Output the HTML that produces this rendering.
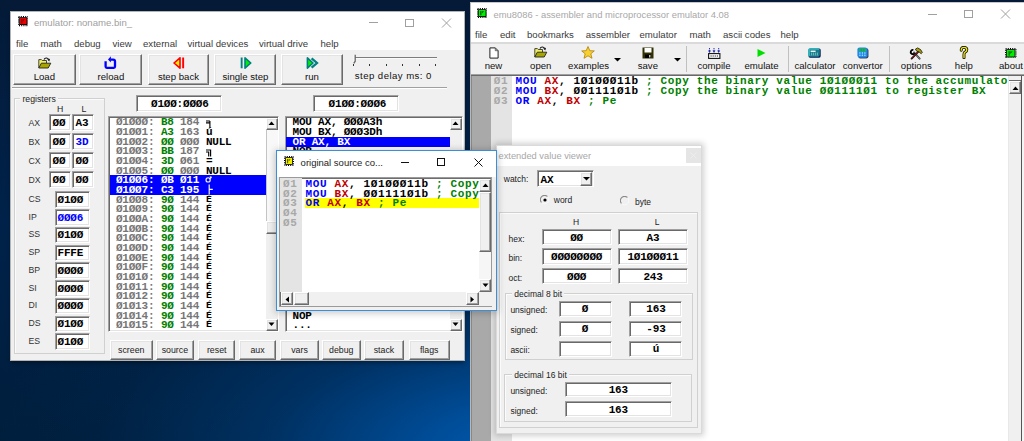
<!DOCTYPE html><html><head><meta charset="utf-8"><style>
html,body{margin:0;padding:0;}
body{width:1024px;height:441px;overflow:hidden;position:relative;
background:radial-gradient(ellipse 560px 250px at 545px 455px, rgba(0,94,186,1) 0%, rgba(0,86,170,0.82) 22%, rgba(0,70,140,0.45) 50%, rgba(0,50,100,0.12) 80%, rgba(0,40,80,0) 100%), linear-gradient(180deg,#041a37 0%,#00224a 50%,#001e3c 100%);}
div{position:absolute;box-sizing:border-box;}
.rb{background:#f0f0f0;border-top:1px solid #fff;border-left:1px solid #fff;border-right:1px solid #6a6a6a;border-bottom:1px solid #6a6a6a;box-shadow:inset -1px -1px 0 #a0a0a0, inset 1px 1px 0 #e3e3e3;}
.sk{border-top:1px solid #a0a0a0;border-left:1px solid #a0a0a0;border-right:1px solid #fff;border-bottom:1px solid #fff;box-shadow:inset 1px 1px 0 #696969, inset -1px -1px 0 #e3e3e3;}
.gb{border:1px solid #d0d0d0;box-shadow:inset 1px 1px 0 #fbfbfb;}
</style></head><body>
<div style="left:10px;top:11px;width:455px;height:349.5px;background:#f0f0f0;border:1px solid #b4b4b4;box-shadow:0 3px 4px -1px rgba(0,0,0,0.35);"></div>
<div style="left:11px;top:12px;width:453px;height:38px;background:#fff;"></div>
<svg style="position:absolute;left:17.6px;top:16.4px" width="10.6" height="10.2" viewBox="0 0 10.6 10.2"><rect x="0.6" y="0.6" width="9.40" height="9.00" fill="none" stroke="#000" stroke-width="1.2" stroke-dasharray="1 1.2"/><rect x="1.2" y="1.2" width="8.20" height="7.80" fill="#000"/><rect x="2" y="2" width="6.60" height="6.20" fill="#ee0000"/><path d="M3.82 3.06v4.28" stroke="#500000" stroke-width="1"/><path d="M4.88 3.26h2.12l-2.12 2.24z" fill="#500000"/></svg>
<div style="left:34px;top:17.18px;font-size:9.6px;line-height:12.48px;color:#a0a0a0;font-weight:400;white-space:pre;font-family:'Liberation Sans', sans-serif;">emulator: noname.bin_</div>
<div style="left:369px;top:22px;width:9px;height:1px;background:#a0a0a0;"></div>
<div style="left:405px;top:18.5px;width:9px;height:8.5px;border:1px solid #a0a0a0;"></div>
<svg style="position:absolute;left:441px;top:18px" width="11" height="10" viewBox="0 0 11 10"><path d="M1 0.5L10 9.5M10 0.5L1 9.5" stroke="#a0a0a0" stroke-width="1"/></svg>
<div style="left:16px;top:37.68px;font-size:9.6px;line-height:12.48px;color:#3a3a3a;font-weight:400;white-space:pre;font-family:'Liberation Sans', sans-serif;">file</div>
<div style="left:40.5px;top:37.68px;font-size:9.6px;line-height:12.48px;color:#3a3a3a;font-weight:400;white-space:pre;font-family:'Liberation Sans', sans-serif;">math</div>
<div style="left:74px;top:37.68px;font-size:9.6px;line-height:12.48px;color:#3a3a3a;font-weight:400;white-space:pre;font-family:'Liberation Sans', sans-serif;">debug</div>
<div style="left:112.5px;top:37.68px;font-size:9.6px;line-height:12.48px;color:#3a3a3a;font-weight:400;white-space:pre;font-family:'Liberation Sans', sans-serif;">view</div>
<div style="left:143px;top:37.68px;font-size:9.6px;line-height:12.48px;color:#3a3a3a;font-weight:400;white-space:pre;font-family:'Liberation Sans', sans-serif;">external</div>
<div style="left:187.5px;top:37.68px;font-size:9.6px;line-height:12.48px;color:#3a3a3a;font-weight:400;white-space:pre;font-family:'Liberation Sans', sans-serif;">virtual devices</div>
<div style="left:259px;top:37.68px;font-size:9.6px;line-height:12.48px;color:#3a3a3a;font-weight:400;white-space:pre;font-family:'Liberation Sans', sans-serif;">virtual drive</div>
<div style="left:320.5px;top:37.68px;font-size:9.6px;line-height:12.48px;color:#3a3a3a;font-weight:400;white-space:pre;font-family:'Liberation Sans', sans-serif;">help</div>
<div class="rb" style="left:13px;top:53.5px;width:62.599999999999994px;height:31px;"></div>
<div style="left:13px;top:70.98px;font-size:9.6px;line-height:12.48px;color:#111;font-weight:400;white-space:pre;font-family:'Liberation Sans', sans-serif;text-align:center;width:62.599999999999994px;">Load</div>
<div class="rb" style="left:79.4px;top:53.5px;width:63.099999999999994px;height:31px;"></div>
<div style="left:79.4px;top:70.98px;font-size:9.6px;line-height:12.48px;color:#111;font-weight:400;white-space:pre;font-family:'Liberation Sans', sans-serif;text-align:center;width:63.099999999999994px;">reload</div>
<div class="rb" style="left:147.5px;top:53.5px;width:61.900000000000006px;height:31px;"></div>
<div style="left:147.5px;top:70.98px;font-size:9.6px;line-height:12.48px;color:#111;font-weight:400;white-space:pre;font-family:'Liberation Sans', sans-serif;text-align:center;width:61.900000000000006px;">step back</div>
<div class="rb" style="left:214.4px;top:53.5px;width:62.099999999999994px;height:31px;"></div>
<div style="left:214.4px;top:70.98px;font-size:9.6px;line-height:12.48px;color:#111;font-weight:400;white-space:pre;font-family:'Liberation Sans', sans-serif;text-align:center;width:62.099999999999994px;">single step</div>
<div class="rb" style="left:281px;top:53.5px;width:62px;height:31px;"></div>
<div style="left:281px;top:70.98px;font-size:9.6px;line-height:12.48px;color:#111;font-weight:400;white-space:pre;font-family:'Liberation Sans', sans-serif;text-align:center;width:62px;">run</div>
<svg style="position:absolute;left:37.5px;top:56.5px" width="14" height="12" viewBox="0 0 14 12"><path d="M0.8 11V2.6h2.6l0.9 0.9h4.2v2.6" fill="#f2f060" stroke="#333" stroke-width="0.9"/><path d="M0.8 11L3.3 6.2H12.8L10.2 11Z" fill="#a8a400" stroke="#222" stroke-width="0.9"/><path d="M6 2.6C7 0.6 9.4 0.4 10.6 2.4" fill="none" stroke="#111" stroke-width="1.1"/><path d="M9.2 2.6L12 1.8L11.3 4.6z" fill="#111"/></svg>
<svg style="position:absolute;left:104px;top:56px" width="13" height="13" viewBox="0 0 13 13"><path d="M1.6 5.2V10.6Q1.6 11.8 2.8 11.8H9.8Q11 11.8 11 10.6V5.4Q11 3.6 9.2 3.6H6.6" fill="none" stroke="#0000ff" stroke-width="2.3"/><path d="M4 3.6L6.9 0.2V6.6Z" fill="#0000ff"/></svg>
<svg style="position:absolute;left:172.5px;top:56.5px" width="12" height="12" viewBox="0 0 12 12"><path d="M1 6L7 0.8V11.2Z" fill="#ffee00" stroke="#ff0000" stroke-width="1.6" stroke-linejoin="round"/><rect x="9.2" y="0.5" width="1.9" height="10.8" fill="#ff0000"/></svg>
<svg style="position:absolute;left:239.5px;top:56.5px" width="12" height="12" viewBox="0 0 12 12"><rect x="0.7" y="0.5" width="1.9" height="10.8" fill="#008080"/><path d="M5 0.9L10.8 6L5 11.1Z" fill="#00ee00" stroke="#008080" stroke-width="1.6" stroke-linejoin="round"/></svg>
<svg style="position:absolute;left:305.5px;top:56.5px" width="13" height="12" viewBox="0 0 13 12"><path d="M5.6 1.3L11 6L5.6 10.7" fill="none" stroke="#008080" stroke-width="2.3"/><path d="M1.4 0.9L7 6L1.4 11.1Z" fill="#00ee00" stroke="#008080" stroke-width="1.6" stroke-linejoin="round"/></svg>
<div style="left:353.5px;top:56.5px;width:83px;height:2.6px;background:#7c7c7c;border-bottom:1px solid #fafafa;"></div>
<svg style="position:absolute;left:351.5px;top:53.5px" width="6" height="10" viewBox="0 0 6 10"><path d="M1 1.5Q2 0.5 3 0.8V7.5L1.5 9.5z" fill="#f8f8f8"/><path d="M3.2 0.8V7.2L1.8 9.4" fill="none" stroke="#666" stroke-width="1.3"/></svg>
<div style="left:353.2px;top:63.5px;width:1px;height:2px;background:#333;"></div>
<div style="left:369.3px;top:63.5px;width:1px;height:2px;background:#333;"></div>
<div style="left:386.1px;top:63.5px;width:1px;height:2px;background:#333;"></div>
<div style="left:402.3px;top:63.5px;width:1px;height:2px;background:#333;"></div>
<div style="left:419.1px;top:63.5px;width:1px;height:2px;background:#333;"></div>
<div style="left:435.3px;top:63.5px;width:1px;height:2px;background:#333;"></div>
<div style="left:354.8px;top:70.48px;font-size:9.6px;line-height:12.48px;color:#111;font-weight:400;white-space:pre;font-family:'Liberation Sans', sans-serif;letter-spacing:0.45px;">step delay ms: 0</div>
<div style="left:12px;top:87px;width:435px;height:1px;background:#a0a0a0;"></div>
<div style="left:12px;top:88px;width:435px;height:1px;background:#fff;"></div>
<div class="gb" style="left:13.6px;top:98px;width:91.2px;height:256px"></div>
<div style="left:20px;top:94.08px;font-size:8.7px;line-height:11.31px;color:#222;font-weight:400;white-space:pre;font-family:'Liberation Sans', sans-serif;background:#f0f0f0;"> registers </div>
<div style="left:57px;top:104.08px;font-size:8.7px;line-height:11.31px;color:#222;font-weight:400;white-space:pre;font-family:'Liberation Sans', sans-serif;">H</div>
<div style="left:81.5px;top:104.08px;font-size:8.7px;line-height:11.31px;color:#222;font-weight:400;white-space:pre;font-family:'Liberation Sans', sans-serif;">L</div>
<div style="left:28.5px;top:118.08px;font-size:8.7px;line-height:11.31px;color:#333;font-weight:400;white-space:pre;font-family:'Liberation Sans', sans-serif;">AX</div>
<div class="sk" style="left:49px;top:113.5px;width:22px;height:17px;background:#fff;"></div>
<div class="sk" style="left:72px;top:113.5px;width:22px;height:17px;background:#fff;"></div>
<div style="left:52.5px;top:115.62px;font-size:11px;line-height:14.3px;color:#000;font-weight:700;white-space:pre;font-family:'Liberation Mono', monospace;letter-spacing:-0.2px;">ØØ</div>
<div style="left:75.5px;top:115.62px;font-size:11px;line-height:14.3px;color:#000;font-weight:700;white-space:pre;font-family:'Liberation Mono', monospace;letter-spacing:-0.2px;">A3</div>
<div style="left:28.5px;top:137.08px;font-size:8.7px;line-height:11.31px;color:#333;font-weight:400;white-space:pre;font-family:'Liberation Sans', sans-serif;">BX</div>
<div class="sk" style="left:49px;top:132.5px;width:22px;height:17px;background:#fff;"></div>
<div class="sk" style="left:72px;top:132.5px;width:22px;height:17px;background:#fff;"></div>
<div style="left:52.5px;top:134.62px;font-size:11px;line-height:14.3px;color:#000;font-weight:700;white-space:pre;font-family:'Liberation Mono', monospace;letter-spacing:-0.2px;">ØØ</div>
<div style="left:75.5px;top:134.62px;font-size:11px;line-height:14.3px;color:#0000ff;font-weight:700;white-space:pre;font-family:'Liberation Mono', monospace;letter-spacing:-0.2px;">3D</div>
<div style="left:28.5px;top:156.08px;font-size:8.7px;line-height:11.31px;color:#333;font-weight:400;white-space:pre;font-family:'Liberation Sans', sans-serif;">CX</div>
<div class="sk" style="left:49px;top:151.5px;width:22px;height:17px;background:#fff;"></div>
<div class="sk" style="left:72px;top:151.5px;width:22px;height:17px;background:#fff;"></div>
<div style="left:52.5px;top:153.62px;font-size:11px;line-height:14.3px;color:#000;font-weight:700;white-space:pre;font-family:'Liberation Mono', monospace;letter-spacing:-0.2px;">ØØ</div>
<div style="left:75.5px;top:153.62px;font-size:11px;line-height:14.3px;color:#000;font-weight:700;white-space:pre;font-family:'Liberation Mono', monospace;letter-spacing:-0.2px;">ØØ</div>
<div style="left:28.5px;top:175.08px;font-size:8.7px;line-height:11.31px;color:#333;font-weight:400;white-space:pre;font-family:'Liberation Sans', sans-serif;">DX</div>
<div class="sk" style="left:49px;top:170.5px;width:22px;height:17px;background:#fff;"></div>
<div class="sk" style="left:72px;top:170.5px;width:22px;height:17px;background:#fff;"></div>
<div style="left:52.5px;top:172.62px;font-size:11px;line-height:14.3px;color:#000;font-weight:700;white-space:pre;font-family:'Liberation Mono', monospace;letter-spacing:-0.2px;">ØØ</div>
<div style="left:75.5px;top:172.62px;font-size:11px;line-height:14.3px;color:#000;font-weight:700;white-space:pre;font-family:'Liberation Mono', monospace;letter-spacing:-0.2px;">ØØ</div>
<div style="left:28.5px;top:193.83px;font-size:8.7px;line-height:11.31px;color:#333;font-weight:400;white-space:pre;font-family:'Liberation Sans', sans-serif;">CS</div>
<div class="sk" style="left:55px;top:191.25px;width:35px;height:16.5px;background:#fff;"></div>
<div style="left:57.5px;top:192.87px;font-size:11px;line-height:14.3px;color:#000;font-weight:700;white-space:pre;font-family:'Liberation Mono', monospace;letter-spacing:-0.2px;">Ø1ØØ</div>
<div style="left:28.5px;top:211.58px;font-size:8.7px;line-height:11.31px;color:#333;font-weight:400;white-space:pre;font-family:'Liberation Sans', sans-serif;">IP</div>
<div class="sk" style="left:55px;top:209.0px;width:35px;height:16.5px;background:#fff;"></div>
<div style="left:57.5px;top:210.62px;font-size:11px;line-height:14.3px;color:#0000ff;font-weight:700;white-space:pre;font-family:'Liberation Mono', monospace;letter-spacing:-0.2px;">ØØØ6</div>
<div style="left:28.5px;top:229.33px;font-size:8.7px;line-height:11.31px;color:#333;font-weight:400;white-space:pre;font-family:'Liberation Sans', sans-serif;">SS</div>
<div class="sk" style="left:55px;top:226.75px;width:35px;height:16.5px;background:#fff;"></div>
<div style="left:57.5px;top:228.37px;font-size:11px;line-height:14.3px;color:#000;font-weight:700;white-space:pre;font-family:'Liberation Mono', monospace;letter-spacing:-0.2px;">Ø1ØØ</div>
<div style="left:28.5px;top:247.08px;font-size:8.7px;line-height:11.31px;color:#333;font-weight:400;white-space:pre;font-family:'Liberation Sans', sans-serif;">SP</div>
<div class="sk" style="left:55px;top:244.5px;width:35px;height:16.5px;background:#fff;"></div>
<div style="left:57.5px;top:246.12px;font-size:11px;line-height:14.3px;color:#000;font-weight:700;white-space:pre;font-family:'Liberation Mono', monospace;letter-spacing:-0.2px;">FFFE</div>
<div style="left:28.5px;top:264.83px;font-size:8.7px;line-height:11.31px;color:#333;font-weight:400;white-space:pre;font-family:'Liberation Sans', sans-serif;">BP</div>
<div class="sk" style="left:55px;top:262.25px;width:35px;height:16.5px;background:#fff;"></div>
<div style="left:57.5px;top:263.87px;font-size:11px;line-height:14.3px;color:#000;font-weight:700;white-space:pre;font-family:'Liberation Mono', monospace;letter-spacing:-0.2px;">ØØØØ</div>
<div style="left:28.5px;top:282.58px;font-size:8.7px;line-height:11.31px;color:#333;font-weight:400;white-space:pre;font-family:'Liberation Sans', sans-serif;">SI</div>
<div class="sk" style="left:55px;top:280.0px;width:35px;height:16.5px;background:#fff;"></div>
<div style="left:57.5px;top:281.62px;font-size:11px;line-height:14.3px;color:#000;font-weight:700;white-space:pre;font-family:'Liberation Mono', monospace;letter-spacing:-0.2px;">ØØØØ</div>
<div style="left:28.5px;top:300.33px;font-size:8.7px;line-height:11.31px;color:#333;font-weight:400;white-space:pre;font-family:'Liberation Sans', sans-serif;">DI</div>
<div class="sk" style="left:55px;top:297.75px;width:35px;height:16.5px;background:#fff;"></div>
<div style="left:57.5px;top:299.37px;font-size:11px;line-height:14.3px;color:#000;font-weight:700;white-space:pre;font-family:'Liberation Mono', monospace;letter-spacing:-0.2px;">ØØØØ</div>
<div style="left:28.5px;top:318.08px;font-size:8.7px;line-height:11.31px;color:#333;font-weight:400;white-space:pre;font-family:'Liberation Sans', sans-serif;">DS</div>
<div class="sk" style="left:55px;top:315.5px;width:35px;height:16.5px;background:#fff;"></div>
<div style="left:57.5px;top:317.12px;font-size:11px;line-height:14.3px;color:#000;font-weight:700;white-space:pre;font-family:'Liberation Mono', monospace;letter-spacing:-0.2px;">Ø1ØØ</div>
<div style="left:28.5px;top:335.83px;font-size:8.7px;line-height:11.31px;color:#333;font-weight:400;white-space:pre;font-family:'Liberation Sans', sans-serif;">ES</div>
<div class="sk" style="left:55px;top:333.25px;width:35px;height:16.5px;background:#fff;"></div>
<div style="left:57.5px;top:334.87px;font-size:11px;line-height:14.3px;color:#000;font-weight:700;white-space:pre;font-family:'Liberation Mono', monospace;letter-spacing:-0.2px;">Ø1ØØ</div>
<div class="sk" style="left:136.2px;top:95px;width:85.5px;height:16.5px;background:#fff;"></div>
<div style="left:151px;top:96.77px;font-size:11px;line-height:14.3px;color:#000;font-weight:700;white-space:pre;font-family:'Liberation Mono', monospace;letter-spacing:-0.2px;">Ø1ØØ:ØØØ6</div>
<div class="sk" style="left:313px;top:95px;width:85.75px;height:16.75px;background:#fff;"></div>
<div style="left:328.6px;top:96.77px;font-size:11px;line-height:14.3px;color:#000;font-weight:700;white-space:pre;font-family:'Liberation Mono', monospace;letter-spacing:-0.2px;">Ø1ØØ:ØØØ6</div>
<div class="sk" style="left:108px;top:116px;width:170.75px;height:215.8px;background:#fff;"></div>
<div style="left:109.5px;top:175.3px;width:156.5px;height:19.9px;background:#0000ff;"></div>
<div style="left:115.9px;top:115.42px;font-size:11px;line-height:14.3px;color:#767676;font-weight:700;white-space:pre;font-family:'Liberation Mono', monospace;letter-spacing:-0.2px;">Ø1ØØØ:</div>
<div style="left:160.9px;top:115.42px;font-size:11px;line-height:14.3px;color:#008000;font-weight:700;white-space:pre;font-family:'Liberation Mono', monospace;letter-spacing:-0.2px;">B8</div>
<div style="left:179.9px;top:115.42px;font-size:11px;line-height:14.3px;color:#767676;font-weight:700;white-space:pre;font-family:'Liberation Mono', monospace;letter-spacing:-0.2px;">184</div>
<svg style="position:absolute;left:204.9px;top:116.40px" width="9" height="12" viewBox="0 0 9 12"><path d="M1 5H4.9M1 6.9H4.9M4.9 5V11.6" fill="none" stroke="#000" stroke-width="1.15"/></svg>
<div style="left:115.9px;top:125.08px;font-size:11px;line-height:14.3px;color:#767676;font-weight:700;white-space:pre;font-family:'Liberation Mono', monospace;letter-spacing:-0.2px;">Ø1ØØ1:</div>
<div style="left:160.9px;top:125.08px;font-size:11px;line-height:14.3px;color:#008000;font-weight:700;white-space:pre;font-family:'Liberation Mono', monospace;letter-spacing:-0.2px;">A3</div>
<div style="left:179.9px;top:125.08px;font-size:11px;line-height:14.3px;color:#767676;font-weight:700;white-space:pre;font-family:'Liberation Mono', monospace;letter-spacing:-0.2px;">163</div>
<div style="left:205.9px;top:125.08px;font-size:11px;line-height:14.3px;color:#000;font-weight:700;white-space:pre;font-family:'Liberation Mono', monospace;letter-spacing:-0.2px;">ú</div>
<div style="left:115.9px;top:134.74px;font-size:11px;line-height:14.3px;color:#767676;font-weight:700;white-space:pre;font-family:'Liberation Mono', monospace;letter-spacing:-0.2px;">Ø1ØØ2:</div>
<div style="left:160.9px;top:134.74px;font-size:11px;line-height:14.3px;color:#008000;font-weight:700;white-space:pre;font-family:'Liberation Mono', monospace;letter-spacing:-0.2px;">ØØ</div>
<div style="left:179.9px;top:134.74px;font-size:11px;line-height:14.3px;color:#767676;font-weight:700;white-space:pre;font-family:'Liberation Mono', monospace;letter-spacing:-0.2px;">ØØØ</div>
<div style="left:205.9px;top:134.74px;font-size:11px;line-height:14.3px;color:#000;font-weight:700;white-space:pre;font-family:'Liberation Mono', monospace;letter-spacing:-0.2px;">NULL</div>
<div style="left:115.9px;top:144.40px;font-size:11px;line-height:14.3px;color:#767676;font-weight:700;white-space:pre;font-family:'Liberation Mono', monospace;letter-spacing:-0.2px;">Ø1ØØ3:</div>
<div style="left:160.9px;top:144.40px;font-size:11px;line-height:14.3px;color:#008000;font-weight:700;white-space:pre;font-family:'Liberation Mono', monospace;letter-spacing:-0.2px;">BB</div>
<div style="left:179.9px;top:144.40px;font-size:11px;line-height:14.3px;color:#767676;font-weight:700;white-space:pre;font-family:'Liberation Mono', monospace;letter-spacing:-0.2px;">187</div>
<svg style="position:absolute;left:204.9px;top:145.38px" width="9" height="12" viewBox="0 0 9 12"><path d="M1 5H5.6V11.6M1 7H3.7V11.6" fill="none" stroke="#000" stroke-width="1.15"/></svg>
<div style="left:115.9px;top:154.06px;font-size:11px;line-height:14.3px;color:#767676;font-weight:700;white-space:pre;font-family:'Liberation Mono', monospace;letter-spacing:-0.2px;">Ø1ØØ4:</div>
<div style="left:160.9px;top:154.06px;font-size:11px;line-height:14.3px;color:#008000;font-weight:700;white-space:pre;font-family:'Liberation Mono', monospace;letter-spacing:-0.2px;">3D</div>
<div style="left:179.9px;top:154.06px;font-size:11px;line-height:14.3px;color:#767676;font-weight:700;white-space:pre;font-family:'Liberation Mono', monospace;letter-spacing:-0.2px;">Ø61</div>
<div style="left:205.9px;top:154.06px;font-size:11px;line-height:14.3px;color:#000;font-weight:700;white-space:pre;font-family:'Liberation Mono', monospace;letter-spacing:-0.2px;">=</div>
<div style="left:115.9px;top:163.72px;font-size:11px;line-height:14.3px;color:#767676;font-weight:700;white-space:pre;font-family:'Liberation Mono', monospace;letter-spacing:-0.2px;">Ø1ØØ5:</div>
<div style="left:160.9px;top:163.72px;font-size:11px;line-height:14.3px;color:#008000;font-weight:700;white-space:pre;font-family:'Liberation Mono', monospace;letter-spacing:-0.2px;">ØØ</div>
<div style="left:179.9px;top:163.72px;font-size:11px;line-height:14.3px;color:#767676;font-weight:700;white-space:pre;font-family:'Liberation Mono', monospace;letter-spacing:-0.2px;">ØØØ</div>
<div style="left:205.9px;top:163.72px;font-size:11px;line-height:14.3px;color:#000;font-weight:700;white-space:pre;font-family:'Liberation Mono', monospace;letter-spacing:-0.2px;">NULL</div>
<div style="left:115.9px;top:173.38px;font-size:11px;line-height:14.3px;color:#fff;font-weight:700;white-space:pre;font-family:'Liberation Mono', monospace;letter-spacing:-0.2px;">Ø1ØØ6:</div>
<div style="left:160.9px;top:173.38px;font-size:11px;line-height:14.3px;color:#fff;font-weight:700;white-space:pre;font-family:'Liberation Mono', monospace;letter-spacing:-0.2px;">ØB</div>
<div style="left:179.9px;top:173.38px;font-size:11px;line-height:14.3px;color:#fff;font-weight:700;white-space:pre;font-family:'Liberation Mono', monospace;letter-spacing:-0.2px;">Ø11</div>
<svg style="position:absolute;left:204.9px;top:174.36px" width="9" height="12" viewBox="0 0 9 12"><path d="M4.6 5.2L6.2 3" fill="none" stroke="#fff" stroke-width="1.15"/><circle cx="3.1" cy="5.9" r="2.1" fill="none" stroke="#fff" stroke-width="1.1"/><path d="M4.4 2.6L6.6 2.5L6.5 4.6z" fill="#fff"/></svg>
<div style="left:115.9px;top:183.04px;font-size:11px;line-height:14.3px;color:#fff;font-weight:700;white-space:pre;font-family:'Liberation Mono', monospace;letter-spacing:-0.2px;">Ø1ØØ7:</div>
<div style="left:160.9px;top:183.04px;font-size:11px;line-height:14.3px;color:#fff;font-weight:700;white-space:pre;font-family:'Liberation Mono', monospace;letter-spacing:-0.2px;">C3</div>
<div style="left:179.9px;top:183.04px;font-size:11px;line-height:14.3px;color:#fff;font-weight:700;white-space:pre;font-family:'Liberation Mono', monospace;letter-spacing:-0.2px;">195</div>
<svg style="position:absolute;left:204.9px;top:184.02px" width="9" height="12" viewBox="0 0 9 12"><path d="M4.2 0.6V11.3M4.2 5.3H7.8" fill="none" stroke="#fff" stroke-width="1.15"/></svg>
<div style="left:115.9px;top:192.70px;font-size:11px;line-height:14.3px;color:#767676;font-weight:700;white-space:pre;font-family:'Liberation Mono', monospace;letter-spacing:-0.2px;">Ø1ØØ8:</div>
<div style="left:160.9px;top:192.70px;font-size:11px;line-height:14.3px;color:#008000;font-weight:700;white-space:pre;font-family:'Liberation Mono', monospace;letter-spacing:-0.2px;">9Ø</div>
<div style="left:179.9px;top:192.70px;font-size:11px;line-height:14.3px;color:#767676;font-weight:700;white-space:pre;font-family:'Liberation Mono', monospace;letter-spacing:-0.2px;">144</div>
<div style="left:205.9px;top:193.80px;font-size:9.8px;line-height:12.74px;color:#000;font-weight:700;white-space:pre;font-family:'Liberation Mono', monospace;letter-spacing:-0.2px;">É</div>
<div style="left:115.9px;top:202.36px;font-size:11px;line-height:14.3px;color:#767676;font-weight:700;white-space:pre;font-family:'Liberation Mono', monospace;letter-spacing:-0.2px;">Ø1ØØ9:</div>
<div style="left:160.9px;top:202.36px;font-size:11px;line-height:14.3px;color:#008000;font-weight:700;white-space:pre;font-family:'Liberation Mono', monospace;letter-spacing:-0.2px;">9Ø</div>
<div style="left:179.9px;top:202.36px;font-size:11px;line-height:14.3px;color:#767676;font-weight:700;white-space:pre;font-family:'Liberation Mono', monospace;letter-spacing:-0.2px;">144</div>
<div style="left:205.9px;top:203.46px;font-size:9.8px;line-height:12.74px;color:#000;font-weight:700;white-space:pre;font-family:'Liberation Mono', monospace;letter-spacing:-0.2px;">É</div>
<div style="left:115.9px;top:212.02px;font-size:11px;line-height:14.3px;color:#767676;font-weight:700;white-space:pre;font-family:'Liberation Mono', monospace;letter-spacing:-0.2px;">Ø1ØØA:</div>
<div style="left:160.9px;top:212.02px;font-size:11px;line-height:14.3px;color:#008000;font-weight:700;white-space:pre;font-family:'Liberation Mono', monospace;letter-spacing:-0.2px;">9Ø</div>
<div style="left:179.9px;top:212.02px;font-size:11px;line-height:14.3px;color:#767676;font-weight:700;white-space:pre;font-family:'Liberation Mono', monospace;letter-spacing:-0.2px;">144</div>
<div style="left:205.9px;top:213.12px;font-size:9.8px;line-height:12.74px;color:#000;font-weight:700;white-space:pre;font-family:'Liberation Mono', monospace;letter-spacing:-0.2px;">É</div>
<div style="left:115.9px;top:221.68px;font-size:11px;line-height:14.3px;color:#767676;font-weight:700;white-space:pre;font-family:'Liberation Mono', monospace;letter-spacing:-0.2px;">Ø1ØØB:</div>
<div style="left:160.9px;top:221.68px;font-size:11px;line-height:14.3px;color:#008000;font-weight:700;white-space:pre;font-family:'Liberation Mono', monospace;letter-spacing:-0.2px;">9Ø</div>
<div style="left:179.9px;top:221.68px;font-size:11px;line-height:14.3px;color:#767676;font-weight:700;white-space:pre;font-family:'Liberation Mono', monospace;letter-spacing:-0.2px;">144</div>
<div style="left:205.9px;top:222.78px;font-size:9.8px;line-height:12.74px;color:#000;font-weight:700;white-space:pre;font-family:'Liberation Mono', monospace;letter-spacing:-0.2px;">É</div>
<div style="left:115.9px;top:231.34px;font-size:11px;line-height:14.3px;color:#767676;font-weight:700;white-space:pre;font-family:'Liberation Mono', monospace;letter-spacing:-0.2px;">Ø1ØØC:</div>
<div style="left:160.9px;top:231.34px;font-size:11px;line-height:14.3px;color:#008000;font-weight:700;white-space:pre;font-family:'Liberation Mono', monospace;letter-spacing:-0.2px;">9Ø</div>
<div style="left:179.9px;top:231.34px;font-size:11px;line-height:14.3px;color:#767676;font-weight:700;white-space:pre;font-family:'Liberation Mono', monospace;letter-spacing:-0.2px;">144</div>
<div style="left:205.9px;top:232.44px;font-size:9.8px;line-height:12.74px;color:#000;font-weight:700;white-space:pre;font-family:'Liberation Mono', monospace;letter-spacing:-0.2px;">É</div>
<div style="left:115.9px;top:241.00px;font-size:11px;line-height:14.3px;color:#767676;font-weight:700;white-space:pre;font-family:'Liberation Mono', monospace;letter-spacing:-0.2px;">Ø1ØØD:</div>
<div style="left:160.9px;top:241.00px;font-size:11px;line-height:14.3px;color:#008000;font-weight:700;white-space:pre;font-family:'Liberation Mono', monospace;letter-spacing:-0.2px;">9Ø</div>
<div style="left:179.9px;top:241.00px;font-size:11px;line-height:14.3px;color:#767676;font-weight:700;white-space:pre;font-family:'Liberation Mono', monospace;letter-spacing:-0.2px;">144</div>
<div style="left:205.9px;top:242.10px;font-size:9.8px;line-height:12.74px;color:#000;font-weight:700;white-space:pre;font-family:'Liberation Mono', monospace;letter-spacing:-0.2px;">É</div>
<div style="left:115.9px;top:250.66px;font-size:11px;line-height:14.3px;color:#767676;font-weight:700;white-space:pre;font-family:'Liberation Mono', monospace;letter-spacing:-0.2px;">Ø1ØØE:</div>
<div style="left:160.9px;top:250.66px;font-size:11px;line-height:14.3px;color:#008000;font-weight:700;white-space:pre;font-family:'Liberation Mono', monospace;letter-spacing:-0.2px;">9Ø</div>
<div style="left:179.9px;top:250.66px;font-size:11px;line-height:14.3px;color:#767676;font-weight:700;white-space:pre;font-family:'Liberation Mono', monospace;letter-spacing:-0.2px;">144</div>
<div style="left:205.9px;top:251.76px;font-size:9.8px;line-height:12.74px;color:#000;font-weight:700;white-space:pre;font-family:'Liberation Mono', monospace;letter-spacing:-0.2px;">É</div>
<div style="left:115.9px;top:260.32px;font-size:11px;line-height:14.3px;color:#767676;font-weight:700;white-space:pre;font-family:'Liberation Mono', monospace;letter-spacing:-0.2px;">Ø1ØØF:</div>
<div style="left:160.9px;top:260.32px;font-size:11px;line-height:14.3px;color:#008000;font-weight:700;white-space:pre;font-family:'Liberation Mono', monospace;letter-spacing:-0.2px;">9Ø</div>
<div style="left:179.9px;top:260.32px;font-size:11px;line-height:14.3px;color:#767676;font-weight:700;white-space:pre;font-family:'Liberation Mono', monospace;letter-spacing:-0.2px;">144</div>
<div style="left:205.9px;top:261.42px;font-size:9.8px;line-height:12.74px;color:#000;font-weight:700;white-space:pre;font-family:'Liberation Mono', monospace;letter-spacing:-0.2px;">É</div>
<div style="left:115.9px;top:269.98px;font-size:11px;line-height:14.3px;color:#767676;font-weight:700;white-space:pre;font-family:'Liberation Mono', monospace;letter-spacing:-0.2px;">Ø1Ø1Ø:</div>
<div style="left:160.9px;top:269.98px;font-size:11px;line-height:14.3px;color:#008000;font-weight:700;white-space:pre;font-family:'Liberation Mono', monospace;letter-spacing:-0.2px;">9Ø</div>
<div style="left:179.9px;top:269.98px;font-size:11px;line-height:14.3px;color:#767676;font-weight:700;white-space:pre;font-family:'Liberation Mono', monospace;letter-spacing:-0.2px;">144</div>
<div style="left:205.9px;top:271.08px;font-size:9.8px;line-height:12.74px;color:#000;font-weight:700;white-space:pre;font-family:'Liberation Mono', monospace;letter-spacing:-0.2px;">É</div>
<div style="left:115.9px;top:279.64px;font-size:11px;line-height:14.3px;color:#767676;font-weight:700;white-space:pre;font-family:'Liberation Mono', monospace;letter-spacing:-0.2px;">Ø1Ø11:</div>
<div style="left:160.9px;top:279.64px;font-size:11px;line-height:14.3px;color:#008000;font-weight:700;white-space:pre;font-family:'Liberation Mono', monospace;letter-spacing:-0.2px;">9Ø</div>
<div style="left:179.9px;top:279.64px;font-size:11px;line-height:14.3px;color:#767676;font-weight:700;white-space:pre;font-family:'Liberation Mono', monospace;letter-spacing:-0.2px;">144</div>
<div style="left:205.9px;top:280.74px;font-size:9.8px;line-height:12.74px;color:#000;font-weight:700;white-space:pre;font-family:'Liberation Mono', monospace;letter-spacing:-0.2px;">É</div>
<div style="left:115.9px;top:289.30px;font-size:11px;line-height:14.3px;color:#767676;font-weight:700;white-space:pre;font-family:'Liberation Mono', monospace;letter-spacing:-0.2px;">Ø1Ø12:</div>
<div style="left:160.9px;top:289.30px;font-size:11px;line-height:14.3px;color:#008000;font-weight:700;white-space:pre;font-family:'Liberation Mono', monospace;letter-spacing:-0.2px;">9Ø</div>
<div style="left:179.9px;top:289.30px;font-size:11px;line-height:14.3px;color:#767676;font-weight:700;white-space:pre;font-family:'Liberation Mono', monospace;letter-spacing:-0.2px;">144</div>
<div style="left:205.9px;top:290.40px;font-size:9.8px;line-height:12.74px;color:#000;font-weight:700;white-space:pre;font-family:'Liberation Mono', monospace;letter-spacing:-0.2px;">É</div>
<div style="left:115.9px;top:298.96px;font-size:11px;line-height:14.3px;color:#767676;font-weight:700;white-space:pre;font-family:'Liberation Mono', monospace;letter-spacing:-0.2px;">Ø1Ø13:</div>
<div style="left:160.9px;top:298.96px;font-size:11px;line-height:14.3px;color:#008000;font-weight:700;white-space:pre;font-family:'Liberation Mono', monospace;letter-spacing:-0.2px;">9Ø</div>
<div style="left:179.9px;top:298.96px;font-size:11px;line-height:14.3px;color:#767676;font-weight:700;white-space:pre;font-family:'Liberation Mono', monospace;letter-spacing:-0.2px;">144</div>
<div style="left:205.9px;top:300.06px;font-size:9.8px;line-height:12.74px;color:#000;font-weight:700;white-space:pre;font-family:'Liberation Mono', monospace;letter-spacing:-0.2px;">É</div>
<div style="left:115.9px;top:308.62px;font-size:11px;line-height:14.3px;color:#767676;font-weight:700;white-space:pre;font-family:'Liberation Mono', monospace;letter-spacing:-0.2px;">Ø1Ø14:</div>
<div style="left:160.9px;top:308.62px;font-size:11px;line-height:14.3px;color:#008000;font-weight:700;white-space:pre;font-family:'Liberation Mono', monospace;letter-spacing:-0.2px;">9Ø</div>
<div style="left:179.9px;top:308.62px;font-size:11px;line-height:14.3px;color:#767676;font-weight:700;white-space:pre;font-family:'Liberation Mono', monospace;letter-spacing:-0.2px;">144</div>
<div style="left:205.9px;top:309.72px;font-size:9.8px;line-height:12.74px;color:#000;font-weight:700;white-space:pre;font-family:'Liberation Mono', monospace;letter-spacing:-0.2px;">É</div>
<div style="left:115.9px;top:318.28px;font-size:11px;line-height:14.3px;color:#767676;font-weight:700;white-space:pre;font-family:'Liberation Mono', monospace;letter-spacing:-0.2px;">Ø1Ø15:</div>
<div style="left:160.9px;top:318.28px;font-size:11px;line-height:14.3px;color:#008000;font-weight:700;white-space:pre;font-family:'Liberation Mono', monospace;letter-spacing:-0.2px;">9Ø</div>
<div style="left:179.9px;top:318.28px;font-size:11px;line-height:14.3px;color:#767676;font-weight:700;white-space:pre;font-family:'Liberation Mono', monospace;letter-spacing:-0.2px;">144</div>
<div style="left:205.9px;top:319.38px;font-size:9.8px;line-height:12.74px;color:#000;font-weight:700;white-space:pre;font-family:'Liberation Mono', monospace;letter-spacing:-0.2px;">É</div>
<div style="left:266px;top:117.5px;width:11.75px;height:212.75px;background:#f0f0f0;"></div>
<div class="rb" style="left:266px;top:117.5px;width:11.75px;height:12.5px;"></div>
<div style="left:266px;top:130px;width:11.75px;height:91.3px;background:#f8f8f8;border-left:1px solid #c4c4c4;"></div>
<div class="rb" style="left:266px;top:318.5px;width:11.75px;height:12.25px;"></div>
<div class="rb" style="left:266px;top:221.3px;width:11.75px;height:13px;"></div>
<svg style="position:absolute;left:268px;top:121px" width="7" height="5"><path d="M0.5 4h6L3.5 0.5z" fill="#000"/></svg>
<svg style="position:absolute;left:268px;top:322px" width="7" height="5"><path d="M0.5 0.5h6L3.5 4z" fill="#000"/></svg>
<div class="sk" style="left:285px;top:116px;width:177.5px;height:215.8px;background:#fff;"></div>
<div style="left:286.2px;top:136.8px;width:163.5px;height:10px;background:#0000ff;"></div>
<div style="left:292.5px;top:115.32px;font-size:11px;line-height:14.3px;color:#000;font-weight:700;white-space:pre;font-family:'Liberation Mono', monospace;letter-spacing:-0.2px;">MOU AX, ØØØA3h</div>
<div style="left:292.5px;top:124.98px;font-size:11px;line-height:14.3px;color:#000;font-weight:700;white-space:pre;font-family:'Liberation Mono', monospace;letter-spacing:-0.2px;">MOU BX, ØØØ3Dh</div>
<div style="left:292.5px;top:134.64px;font-size:11px;line-height:14.3px;color:#fff;font-weight:700;white-space:pre;font-family:'Liberation Mono', monospace;letter-spacing:-0.2px;">OR AX, BX</div>
<div style="left:292.5px;top:144.30px;font-size:11px;line-height:14.3px;color:#000;font-weight:700;white-space:pre;font-family:'Liberation Mono', monospace;letter-spacing:-0.2px;">NOP</div>
<div style="left:292.5px;top:153.96px;font-size:11px;line-height:14.3px;color:#000;font-weight:700;white-space:pre;font-family:'Liberation Mono', monospace;letter-spacing:-0.2px;">NOP</div>
<div style="left:292.5px;top:163.62px;font-size:11px;line-height:14.3px;color:#000;font-weight:700;white-space:pre;font-family:'Liberation Mono', monospace;letter-spacing:-0.2px;">NOP</div>
<div style="left:292.5px;top:173.28px;font-size:11px;line-height:14.3px;color:#000;font-weight:700;white-space:pre;font-family:'Liberation Mono', monospace;letter-spacing:-0.2px;">NOP</div>
<div style="left:292.5px;top:182.94px;font-size:11px;line-height:14.3px;color:#000;font-weight:700;white-space:pre;font-family:'Liberation Mono', monospace;letter-spacing:-0.2px;">NOP</div>
<div style="left:292.5px;top:192.60px;font-size:11px;line-height:14.3px;color:#000;font-weight:700;white-space:pre;font-family:'Liberation Mono', monospace;letter-spacing:-0.2px;">NOP</div>
<div style="left:292.5px;top:202.26px;font-size:11px;line-height:14.3px;color:#000;font-weight:700;white-space:pre;font-family:'Liberation Mono', monospace;letter-spacing:-0.2px;">NOP</div>
<div style="left:292.5px;top:211.92px;font-size:11px;line-height:14.3px;color:#000;font-weight:700;white-space:pre;font-family:'Liberation Mono', monospace;letter-spacing:-0.2px;">NOP</div>
<div style="left:292.5px;top:221.58px;font-size:11px;line-height:14.3px;color:#000;font-weight:700;white-space:pre;font-family:'Liberation Mono', monospace;letter-spacing:-0.2px;">NOP</div>
<div style="left:292.5px;top:231.24px;font-size:11px;line-height:14.3px;color:#000;font-weight:700;white-space:pre;font-family:'Liberation Mono', monospace;letter-spacing:-0.2px;">NOP</div>
<div style="left:292.5px;top:240.90px;font-size:11px;line-height:14.3px;color:#000;font-weight:700;white-space:pre;font-family:'Liberation Mono', monospace;letter-spacing:-0.2px;">NOP</div>
<div style="left:292.5px;top:250.56px;font-size:11px;line-height:14.3px;color:#000;font-weight:700;white-space:pre;font-family:'Liberation Mono', monospace;letter-spacing:-0.2px;">NOP</div>
<div style="left:292.5px;top:260.22px;font-size:11px;line-height:14.3px;color:#000;font-weight:700;white-space:pre;font-family:'Liberation Mono', monospace;letter-spacing:-0.2px;">NOP</div>
<div style="left:292.5px;top:269.88px;font-size:11px;line-height:14.3px;color:#000;font-weight:700;white-space:pre;font-family:'Liberation Mono', monospace;letter-spacing:-0.2px;">NOP</div>
<div style="left:292.5px;top:279.54px;font-size:11px;line-height:14.3px;color:#000;font-weight:700;white-space:pre;font-family:'Liberation Mono', monospace;letter-spacing:-0.2px;">NOP</div>
<div style="left:292.5px;top:289.20px;font-size:11px;line-height:14.3px;color:#000;font-weight:700;white-space:pre;font-family:'Liberation Mono', monospace;letter-spacing:-0.2px;">NOP</div>
<div style="left:292.5px;top:298.86px;font-size:11px;line-height:14.3px;color:#000;font-weight:700;white-space:pre;font-family:'Liberation Mono', monospace;letter-spacing:-0.2px;">NOP</div>
<div style="left:292.5px;top:308.52px;font-size:11px;line-height:14.3px;color:#000;font-weight:700;white-space:pre;font-family:'Liberation Mono', monospace;letter-spacing:-0.2px;">NOP</div>
<div style="left:292.5px;top:318.18px;font-size:11px;line-height:14.3px;color:#000;font-weight:700;white-space:pre;font-family:'Liberation Mono', monospace;letter-spacing:-0.2px;">...</div>
<div style="left:450px;top:117.5px;width:11.5px;height:212.75px;background:#f0f0f0;"></div>
<div class="rb" style="left:450px;top:117.5px;width:11.5px;height:12.5px;"></div>
<div class="rb" style="left:450px;top:318.5px;width:11.5px;height:12.25px;"></div>
<svg style="position:absolute;left:452px;top:121px" width="7" height="5"><path d="M0.5 4h6L3.5 0.5z" fill="#000"/></svg>
<svg style="position:absolute;left:452px;top:322px" width="7" height="5"><path d="M0.5 0.5h6L3.5 4z" fill="#000"/></svg>
<div class="rb" style="left:110px;top:339.6px;width:42.5px;height:20.4px;"></div>
<div style="left:110px;top:344.98px;font-size:8.8px;line-height:11.44px;color:#222;font-weight:400;white-space:pre;font-family:'Liberation Sans', sans-serif;text-align:center;width:42.5px;">screen</div>
<div class="rb" style="left:156px;top:339.6px;width:37.75px;height:20.4px;"></div>
<div style="left:156px;top:344.98px;font-size:8.8px;line-height:11.44px;color:#222;font-weight:400;white-space:pre;font-family:'Liberation Sans', sans-serif;text-align:center;width:37.75px;">source</div>
<div class="rb" style="left:198px;top:339.6px;width:37.400000000000006px;height:20.4px;"></div>
<div style="left:198px;top:344.98px;font-size:8.8px;line-height:11.44px;color:#222;font-weight:400;white-space:pre;font-family:'Liberation Sans', sans-serif;text-align:center;width:37.400000000000006px;">reset</div>
<div class="rb" style="left:239px;top:339.6px;width:37px;height:20.4px;"></div>
<div style="left:239px;top:344.98px;font-size:8.8px;line-height:11.44px;color:#222;font-weight:400;white-space:pre;font-family:'Liberation Sans', sans-serif;text-align:center;width:37px;">aux</div>
<div class="rb" style="left:280px;top:339.6px;width:39px;height:20.4px;"></div>
<div style="left:280px;top:344.98px;font-size:8.8px;line-height:11.44px;color:#222;font-weight:400;white-space:pre;font-family:'Liberation Sans', sans-serif;text-align:center;width:39px;">vars</div>
<div class="rb" style="left:322px;top:339.6px;width:38.5px;height:20.4px;"></div>
<div style="left:322px;top:344.98px;font-size:8.8px;line-height:11.44px;color:#222;font-weight:400;white-space:pre;font-family:'Liberation Sans', sans-serif;text-align:center;width:38.5px;">debug</div>
<div class="rb" style="left:364px;top:339.6px;width:40px;height:20.4px;"></div>
<div style="left:364px;top:344.98px;font-size:8.8px;line-height:11.44px;color:#222;font-weight:400;white-space:pre;font-family:'Liberation Sans', sans-serif;text-align:center;width:40px;">stack</div>
<div class="rb" style="left:408.6px;top:339.6px;width:41.19999999999999px;height:20.4px;"></div>
<div style="left:408.6px;top:344.98px;font-size:8.8px;line-height:11.44px;color:#222;font-weight:400;white-space:pre;font-family:'Liberation Sans', sans-serif;text-align:center;width:41.19999999999999px;">flags</div>
<div style="left:469.5px;top:2px;width:554.5px;height:439px;background:#f0f0f0;border-left:1px solid #b8b8b8;border-top:1px solid #c8c8c8;"></div>
<div style="left:470.5px;top:3px;width:553.5px;height:39.5px;background:#fff;"></div>
<svg style="position:absolute;left:476.6px;top:7.6px" width="10.6" height="10.2" viewBox="0 0 10.6 10.2"><rect x="0.6" y="0.6" width="9.40" height="9.00" fill="none" stroke="#000" stroke-width="1.2" stroke-dasharray="1 1.2"/><rect x="1.2" y="1.2" width="8.20" height="7.80" fill="#000"/><rect x="2" y="2" width="6.60" height="6.20" fill="#00ee00"/><path d="M3.82 3.06v4.28" stroke="#004000" stroke-width="1"/><path d="M4.88 3.26h2.12l-2.12 2.24z" fill="#004000"/></svg>
<div style="left:493.5px;top:8.58px;font-size:9.4px;line-height:12.22px;color:#a8a8a8;font-weight:400;white-space:pre;font-family:'Liberation Sans', sans-serif;">emu8086 - assembler and microprocessor emulator 4.08</div>
<div style="left:928px;top:13.5px;width:9px;height:1px;background:#a0a0a0;"></div>
<div style="left:964px;top:9.5px;width:9px;height:8.5px;border:1px solid #a0a0a0;"></div>
<svg style="position:absolute;left:1000px;top:9px" width="11" height="10" viewBox="0 0 11 10"><path d="M1 0.5L10 9.5M10 0.5L1 9.5" stroke="#a0a0a0" stroke-width="1"/></svg>
<div style="left:475px;top:28.68px;font-size:9.6px;line-height:12.48px;color:#3a3a3a;font-weight:400;white-space:pre;font-family:'Liberation Sans', sans-serif;">file</div>
<div style="left:500px;top:28.68px;font-size:9.6px;line-height:12.48px;color:#3a3a3a;font-weight:400;white-space:pre;font-family:'Liberation Sans', sans-serif;">edit</div>
<div style="left:527px;top:28.68px;font-size:9.6px;line-height:12.48px;color:#3a3a3a;font-weight:400;white-space:pre;font-family:'Liberation Sans', sans-serif;">bookmarks</div>
<div style="left:585.75px;top:28.68px;font-size:9.6px;line-height:12.48px;color:#3a3a3a;font-weight:400;white-space:pre;font-family:'Liberation Sans', sans-serif;">assembler</div>
<div style="left:639.5px;top:28.68px;font-size:9.6px;line-height:12.48px;color:#3a3a3a;font-weight:400;white-space:pre;font-family:'Liberation Sans', sans-serif;">emulator</div>
<div style="left:689.5px;top:28.68px;font-size:9.6px;line-height:12.48px;color:#3a3a3a;font-weight:400;white-space:pre;font-family:'Liberation Sans', sans-serif;">math</div>
<div style="left:723px;top:28.68px;font-size:9.6px;line-height:12.48px;color:#3a3a3a;font-weight:400;white-space:pre;font-family:'Liberation Sans', sans-serif;">ascii codes</div>
<div style="left:780.5px;top:28.68px;font-size:9.6px;line-height:12.48px;color:#3a3a3a;font-weight:400;white-space:pre;font-family:'Liberation Sans', sans-serif;">help</div>
<div style="left:470.5px;top:42px;width:553.5px;height:2px;background:#dadada;"></div>
<div style="left:480px;top:60.18px;font-size:9.6px;line-height:12.48px;color:#111;font-weight:400;white-space:pre;font-family:'Liberation Sans', sans-serif;text-align:center;width:27px;">new</div>
<div style="left:525.5px;top:60.18px;font-size:9.6px;line-height:12.48px;color:#111;font-weight:400;white-space:pre;font-family:'Liberation Sans', sans-serif;text-align:center;width:30.5px;">open</div>
<div style="left:564px;top:60.18px;font-size:9.6px;line-height:12.48px;color:#111;font-weight:400;white-space:pre;font-family:'Liberation Sans', sans-serif;text-align:center;width:49.25px;">examples</div>
<div style="left:633.75px;top:60.18px;font-size:9.6px;line-height:12.48px;color:#111;font-weight:400;white-space:pre;font-family:'Liberation Sans', sans-serif;text-align:center;width:28.25px;">save</div>
<div style="left:691.5px;top:60.18px;font-size:9.6px;line-height:12.48px;color:#111;font-weight:400;white-space:pre;font-family:'Liberation Sans', sans-serif;text-align:center;width:45.0px;">compile</div>
<div style="left:739.4px;top:60.18px;font-size:9.6px;line-height:12.48px;color:#111;font-weight:400;white-space:pre;font-family:'Liberation Sans', sans-serif;text-align:center;width:44.35000000000002px;">emulate</div>
<div style="left:789px;top:60.18px;font-size:9.6px;line-height:12.48px;color:#111;font-weight:400;white-space:pre;font-family:'Liberation Sans', sans-serif;text-align:center;width:52px;">calculator</div>
<div style="left:837.5px;top:60.18px;font-size:9.6px;line-height:12.48px;color:#111;font-weight:400;white-space:pre;font-family:'Liberation Sans', sans-serif;text-align:center;width:50.5px;">convertor</div>
<div style="left:895.4px;top:60.18px;font-size:9.6px;line-height:12.48px;color:#111;font-weight:400;white-space:pre;font-family:'Liberation Sans', sans-serif;text-align:center;width:41.85000000000002px;">options</div>
<div style="left:949.75px;top:60.18px;font-size:9.6px;line-height:12.48px;color:#111;font-weight:400;white-space:pre;font-family:'Liberation Sans', sans-serif;text-align:center;width:28.25px;">help</div>
<div style="left:999px;top:60.18px;font-size:9.6px;line-height:12.48px;color:#111;font-weight:400;white-space:pre;font-family:'Liberation Sans', sans-serif;">about</div>
<div style="left:686.25px;top:46px;width:1px;height:26px;background:#c0c0c0;"></div>
<div style="left:787.5px;top:46px;width:1px;height:26px;background:#c0c0c0;"></div>
<div style="left:889.4px;top:46px;width:1px;height:26px;background:#c0c0c0;"></div>
<svg style="position:absolute;left:614.4px;top:58px" width="7" height="4"><path d="M0 0h7L3.5 3.5z" fill="#000"/></svg>
<svg style="position:absolute;left:673.75px;top:58px" width="7" height="4"><path d="M0 0h7L3.5 3.5z" fill="#000"/></svg>
<svg style="position:absolute;left:488.5px;top:46.5px" width="10" height="12" viewBox="0 0 10 12"><path d="M0.9 0.9h5.4l2.8 2.8v7.4h-8.2z" fill="#fff" stroke="#222" stroke-width="1"/><path d="M6.3 0.9v2.8h2.8" fill="none" stroke="#555" stroke-width="0.9"/></svg>
<svg style="position:absolute;left:533.8px;top:46px" width="14" height="12" viewBox="0 0 14 12"><path d="M0.8 11V2.6h2.6l0.9 0.9h4.2v2.6" fill="#f2f060" stroke="#333" stroke-width="0.9"/><path d="M0.8 11L3.3 6.2H12.8L10.2 11Z" fill="#a8a400" stroke="#222" stroke-width="0.9"/><path d="M6 2.6C7 0.6 9.4 0.4 10.6 2.4" fill="none" stroke="#111" stroke-width="1.1"/><path d="M9.2 2.6L12 1.8L11.3 4.6z" fill="#111"/></svg>
<svg style="position:absolute;left:580.5px;top:46px" width="14" height="13" viewBox="0 0 14 13"><path d="M7 0.5L8.8 4.7L13.3 4.9L9.8 7.8L11 12.3L7 9.8L3 12.3L4.2 7.8L0.7 4.9L5.2 4.7z" fill="#f8d030" stroke="#b08000" stroke-width="0.8"/></svg>
<svg style="position:absolute;left:641.5px;top:47px" width="12" height="12" viewBox="0 0 12 12"><rect x="0.5" y="0.5" width="11" height="11" fill="#303000" /><rect x="2.5" y="1" width="7" height="4.5" fill="#fff"/><rect x="3" y="7.5" width="6" height="3.5" fill="#000"/><rect x="7" y="8" width="1.5" height="2.5" fill="#c0c0c0"/></svg>
<svg style="position:absolute;left:707.8px;top:48px" width="13" height="11" viewBox="0 0 13 11"><g fill="#2828b8"><rect x="1" y="0" width="1" height="1"/><rect x="5.5" y="0" width="1" height="1"/><rect x="10.2" y="0" width="1" height="1"/><path d="M0 2.4h3l-1.5 2.6zM4.5 2.4h3l-1.5 2.6zM9.2 2.4h3l-1.5 2.6z"/><rect x="1" y="1.6" width="1" height="1.5"/><rect x="5.5" y="1.6" width="1" height="1.5"/><rect x="10.2" y="1.6" width="1" height="1.5"/></g><rect x="0.6" y="5.6" width="11.3" height="4.8" fill="#fff" stroke="#111" stroke-width="1.1"/><path d="M2.5 8h7.5" stroke="#909090" stroke-width="1.8" stroke-dasharray="1.2 0.9"/></svg>
<svg style="position:absolute;left:757px;top:48.5px" width="9" height="8" viewBox="0 0 9 8"><path d="M0.5 0L8.5 4L0.5 8z" fill="#00e000"/></svg>
<svg style="position:absolute;left:808.3px;top:47.8px" width="13" height="10" viewBox="0 0 13 10"><rect x="0.5" y="0.5" width="12.2" height="9.2" rx="1.6" fill="#001a50"/><rect x="0.3" y="0.3" width="11.2" height="8.2" rx="1.5" fill="#28b8c0"/><rect x="2" y="1.8" width="9" height="6" fill="#1a7a88"/><rect x="2.6" y="2.6" width="5" height="1.3" fill="#ffffff"/><path d="M3 5.2h7M3 6.8h7" stroke="#a8e0e0" stroke-width="0.8" stroke-dasharray="1.2 0.8"/></svg>
<svg style="position:absolute;left:856.6px;top:47px" width="12" height="12" viewBox="0 0 12 12"><rect x="1.2" y="1.2" width="10.3" height="10.3" rx="2.2" fill="#3a4a60"/><rect x="0.4" y="0.4" width="10" height="10" rx="2.2" fill="#1e88f0"/><rect x="2" y="1.8" width="6.8" height="2.4" fill="#20d020"/><path d="M2.6 3h5.6" stroke="#105010" stroke-width="0.7" stroke-dasharray="1 0.6"/><g fill="#b0f0ff"><circle cx="2.9" cy="6" r="0.7"/><circle cx="5.4" cy="6" r="0.7"/><circle cx="7.9" cy="6" r="0.7"/><circle cx="2.9" cy="8.3" r="0.7"/><circle cx="5.4" cy="8.3" r="0.7"/><circle cx="7.9" cy="8.3" r="0.7"/></g></svg>
<svg style="position:absolute;left:909px;top:46.5px" width="14" height="13" viewBox="0 0 14 13"><path d="M5.2 5.6L10.6 11.6" stroke="#3a3a3a" stroke-width="2" stroke-linecap="round"/><path d="M5.2 5.6L10.6 11.6" stroke="#a8a8a8" stroke-width="0.7"/><path d="M4.4 3A2.1 2.1 0 1 0 5.6 6.2" fill="none" stroke="#000" stroke-width="1.8"/><path d="M9.4 4.6L2.6 11.6" stroke="#2a0808" stroke-width="1.9" stroke-linecap="round"/><path d="M9.4 4.6L2.6 11.6" stroke="#8a1a1a" stroke-width="0.8"/><path d="M6.4 2.2L8.6 0.9L11.6 2.6L13.3 5.4L12.2 6.7L9.8 4.7L7.8 4.3z" fill="#a8a000" stroke="#111" stroke-width="0.8"/></svg>
<svg style="position:absolute;left:958.6px;top:46.2px" width="10" height="13" viewBox="0 0 10 13"><path d="M2.2 4.2Q2.2 1.4 5 1.4Q7.8 1.4 7.8 3.8Q7.8 5.3 6.1 6.1Q5 6.7 5 8.2V11.8" fill="none" stroke="#000" stroke-width="2.9" stroke-linecap="round"/><path d="M2.2 4.2Q2.2 1.4 5 1.4Q7.8 1.4 7.8 3.8Q7.8 5.3 6.1 6.1Q5 6.7 5 8.2V11.8" fill="none" stroke="#f0e800" stroke-width="1.4" stroke-linecap="round"/><circle cx="4.4" cy="3.6" r="0.6" fill="#fff"/></svg>
<svg style="position:absolute;left:1005.2px;top:47.8px" width="11.6" height="10.6" viewBox="0 0 11.6 10.6"><rect x="0.6" y="0.6" width="10.40" height="9.40" fill="none" stroke="#000" stroke-width="1.2" stroke-dasharray="1 1.2"/><rect x="1.2" y="1.2" width="9.20" height="8.20" fill="#000"/><rect x="2" y="2" width="7.60" height="6.60" fill="#00ee00"/><path d="M4.18 3.18v4.45" stroke="#004000" stroke-width="1"/><path d="M5.34 3.39h2.32l-2.32 2.33z" fill="#004000"/></svg>
<div style="left:470.5px;top:73.8px;width:553.5px;height:1px;background:#a0a0a0;"></div>
<div style="left:470.5px;top:74.8px;width:553.5px;height:1px;background:#696969;"></div>
<div style="left:470.5px;top:75.8px;width:2.5px;height:365.2px;background:#888;"></div>
<div style="left:472px;top:75.8px;width:18.6px;height:365.2px;background:#a9a9a9;"></div>
<div style="left:490.6px;top:75.8px;width:21.4px;height:365.2px;background:#e4e4e4;"></div>
<div style="left:512px;top:75.8px;width:496.4px;height:365.2px;background:#fff;"></div>
<div style="left:493.75px;top:74.42px;font-size:11px;line-height:14.3px;color:#a8a8a8;font-weight:700;white-space:pre;font-family:'Liberation Mono', monospace;letter-spacing:0.64px;">Ø1</div>
<div style="left:515.6px;top:74.42px;font-size:11px;line-height:14.3px;color:#000;font-weight:700;white-space:pre;font-family:'Liberation Mono', monospace;letter-spacing:0.64px;"><span style="color:#0000ff">MOU</span><span style="color:#000"> </span><span style="color:#c00000">AX</span><span style="color:#000">, 1Ø1ØØØ11b </span><span style="color:#008000">; Copy the binary value 1Ø1ØØØ11 to the accumulator</span></div>
<div style="left:493.75px;top:84.08px;font-size:11px;line-height:14.3px;color:#a8a8a8;font-weight:700;white-space:pre;font-family:'Liberation Mono', monospace;letter-spacing:0.64px;">Ø2</div>
<div style="left:515.6px;top:84.08px;font-size:11px;line-height:14.3px;color:#000;font-weight:700;white-space:pre;font-family:'Liberation Mono', monospace;letter-spacing:0.64px;"><span style="color:#0000ff">MOU</span><span style="color:#000"> </span><span style="color:#c00000">BX</span><span style="color:#000">, ØØ1111Ø1b </span><span style="color:#008000">; Copy the binary value ØØ1111Ø1 to register BX</span></div>
<div style="left:493.75px;top:93.74px;font-size:11px;line-height:14.3px;color:#a8a8a8;font-weight:700;white-space:pre;font-family:'Liberation Mono', monospace;letter-spacing:0.64px;">Ø3</div>
<div style="left:515.6px;top:93.74px;font-size:11px;line-height:14.3px;color:#000;font-weight:700;white-space:pre;font-family:'Liberation Mono', monospace;letter-spacing:0.64px;"><span style="color:#0000ff">OR</span><span style="color:#000"> </span><span style="color:#c00000">AX</span><span style="color:#000">, </span><span style="color:#c00000">BX</span><span style="color:#000"> </span><span style="color:#008000">; Pe</span></div>
<div style="left:1008.4px;top:75.8px;width:12.6px;height:365.2px;background:#f0f0f0;border-left:1px solid #e8e8e8;"></div>
<div style="left:1008.6px;top:75.8px;width:12.6px;height:5.2px;background:#f0f0f0;border-bottom:1.2px solid #6a6a6a;"></div>
<div class="rb" style="left:1008.6px;top:81px;width:12.6px;height:13.2px;"></div>
<svg style="position:absolute;left:1011.6px;top:85.8px" width="7" height="5"><path d="M0.5 4h6L3.5 0.5z" fill="#000"/></svg>
<div style="left:1021px;top:75.8px;width:1.2px;height:365.2px;background:#555;"></div>
<div style="left:1022.2px;top:75.8px;width:2px;height:365.2px;background:#f4f4f4;"></div>
<div style="left:493px;top:143px;width:213px;height:294px;box-shadow:0 0 6px 2px rgba(0,0,0,0.18);background:#f0f0f0;border:1px solid #dadada;left:495.6px;top:145.2px;width:206.6px;height:289px;"></div>
<div style="left:496.6px;top:146.2px;width:204.4px;height:20.3px;background:#fff;"></div>
<div style="left:498.5px;top:150.28px;font-size:9.3px;line-height:12.09px;color:#a8a8a8;font-weight:400;white-space:pre;font-family:'Liberation Sans', sans-serif;">extended value viewer</div>
<div style="left:686px;top:148px;width:15px;height:15px;background:#e5e5e5;"></div>
<svg style="position:absolute;left:690px;top:152px" width="7" height="7"><path d="M0.5 0.5L6.5 6.5M6.5 0.5L0.5 6.5" stroke="#efefef" stroke-width="0.8"/></svg>
<div style="left:503.75px;top:174.18px;font-size:8.5px;line-height:11.05px;color:#222;font-weight:400;white-space:pre;font-family:'Liberation Sans', sans-serif;">watch:</div>
<div class="sk" style="left:537px;top:170px;width:56.75px;height:17px;background:#fff;"></div>
<div style="left:540.6px;top:172.52px;font-size:11px;line-height:14.3px;color:#000;font-weight:700;white-space:pre;font-family:'Liberation Mono', monospace;letter-spacing:-0.2px;">AX</div>
<div class="rb" style="left:580px;top:171.5px;width:12px;height:14px;"></div>
<svg style="position:absolute;left:583px;top:177px" width="7" height="4"><path d="M0 0h7L3.5 3.5z" fill="#000"/></svg>
<svg style="position:absolute;left:539.5px;top:194.5px" width="10" height="10" viewBox="0 0 10 10"><path d="M1.6 7.6A4 4 0 0 1 7.6 1.6" fill="none" stroke="#8a8a8a" stroke-width="1.1"/><path d="M7.6 1.6A4 4 0 0 1 1.6 7.6" fill="none" stroke="#fafafa" stroke-width="1"/><circle cx="5" cy="5" r="1.6" fill="#000"/></svg>
<div style="left:553.75px;top:195.38px;font-size:8.5px;line-height:11.05px;color:#222;font-weight:400;white-space:pre;font-family:'Liberation Sans', sans-serif;">word</div>
<svg style="position:absolute;left:620.3px;top:196px" width="10" height="10" viewBox="0 0 10 10"><path d="M1.6 7.6A4 4 0 0 1 7.6 1.6" fill="none" stroke="#8a8a8a" stroke-width="1.1"/><path d="M7.6 1.6A4 4 0 0 1 1.6 7.6" fill="none" stroke="#fafafa" stroke-width="1"/></svg>
<div style="left:635px;top:197.28px;font-size:8.5px;line-height:11.05px;color:#222;font-weight:400;white-space:pre;font-family:'Liberation Sans', sans-serif;">byte</div>
<div class="gb" style="left:499px;top:212.25px;width:198.5px;height:215.6px"></div>
<div style="left:573px;top:217.28px;font-size:8.5px;line-height:11.05px;color:#222;font-weight:400;white-space:pre;font-family:'Liberation Sans', sans-serif;">H</div>
<div style="left:654.75px;top:217.28px;font-size:8.5px;line-height:11.05px;color:#222;font-weight:400;white-space:pre;font-family:'Liberation Sans', sans-serif;">L</div>
<div style="left:508.5px;top:233.53px;font-size:8.5px;line-height:11.05px;color:#222;font-weight:400;white-space:pre;font-family:'Liberation Sans', sans-serif;">hex:</div>
<div class="sk" style="left:541.6px;top:228.75px;width:70px;height:16.4px;background:#fff;"></div>
<div class="sk" style="left:618px;top:228.75px;width:70px;height:16.4px;background:#fff;"></div>
<div style="left:541.6px;top:230.62px;font-size:11px;line-height:14.3px;color:#000;font-weight:700;white-space:pre;font-family:'Liberation Mono', monospace;letter-spacing:-0.2px;text-align:center;width:70px;">ØØ</div>
<div style="left:618px;top:230.62px;font-size:11px;line-height:14.3px;color:#000;font-weight:700;white-space:pre;font-family:'Liberation Mono', monospace;letter-spacing:-0.2px;text-align:center;width:70px;">A3</div>
<div style="left:508.5px;top:252.88px;font-size:8.5px;line-height:11.05px;color:#222;font-weight:400;white-space:pre;font-family:'Liberation Sans', sans-serif;">bin:</div>
<div class="sk" style="left:541.6px;top:248.35px;width:70px;height:16.4px;background:#fff;"></div>
<div class="sk" style="left:618px;top:248.35px;width:70px;height:16.4px;background:#fff;"></div>
<div style="left:541.6px;top:250.22px;font-size:11px;line-height:14.3px;color:#000;font-weight:700;white-space:pre;font-family:'Liberation Mono', monospace;letter-spacing:-0.2px;text-align:center;width:70px;">ØØØØØØØØ</div>
<div style="left:618px;top:250.22px;font-size:11px;line-height:14.3px;color:#000;font-weight:700;white-space:pre;font-family:'Liberation Mono', monospace;letter-spacing:-0.2px;text-align:center;width:70px;">1Ø1ØØØ11</div>
<div style="left:508.5px;top:272.88px;font-size:8.5px;line-height:11.05px;color:#222;font-weight:400;white-space:pre;font-family:'Liberation Sans', sans-serif;">oct:</div>
<div class="sk" style="left:541.6px;top:267.95px;width:70px;height:16.4px;background:#fff;"></div>
<div class="sk" style="left:618px;top:267.95px;width:70px;height:16.4px;background:#fff;"></div>
<div style="left:541.6px;top:269.82px;font-size:11px;line-height:14.3px;color:#000;font-weight:700;white-space:pre;font-family:'Liberation Mono', monospace;letter-spacing:-0.2px;text-align:center;width:70px;">ØØØ</div>
<div style="left:618px;top:269.82px;font-size:11px;line-height:14.3px;color:#000;font-weight:700;white-space:pre;font-family:'Liberation Mono', monospace;letter-spacing:-0.2px;text-align:center;width:70px;">243</div>
<div class="gb" style="left:504.5px;top:293px;width:188px;height:67.4px"></div>
<div style="left:512px;top:289.18px;font-size:8.5px;line-height:11.05px;color:#222;font-weight:400;white-space:pre;font-family:'Liberation Sans', sans-serif;background:#f0f0f0;"> decimal 8 bit </div>
<div style="left:510.4px;top:305.38px;font-size:8.5px;line-height:11.05px;color:#222;font-weight:400;white-space:pre;font-family:'Liberation Sans', sans-serif;">unsigned:</div>
<div class="sk" style="left:558.5px;top:300.6px;width:53.1px;height:16px;background:#fff;"></div>
<div class="sk" style="left:629.4px;top:300.6px;width:53.1px;height:16px;background:#fff;"></div>
<div style="left:558.5px;top:302.22px;font-size:11px;line-height:14.3px;color:#000;font-weight:700;white-space:pre;font-family:'Liberation Mono', monospace;letter-spacing:-0.2px;text-align:center;width:53.1px;">Ø</div>
<div style="left:629.4px;top:302.22px;font-size:11px;line-height:14.3px;color:#000;font-weight:700;white-space:pre;font-family:'Liberation Mono', monospace;letter-spacing:-0.2px;text-align:center;width:53.1px;">163</div>
<div style="left:510.4px;top:325.38px;font-size:8.5px;line-height:11.05px;color:#222;font-weight:400;white-space:pre;font-family:'Liberation Sans', sans-serif;">signed:</div>
<div class="sk" style="left:558.5px;top:320.6px;width:53.1px;height:16px;background:#fff;"></div>
<div class="sk" style="left:629.4px;top:320.6px;width:53.1px;height:16px;background:#fff;"></div>
<div style="left:558.5px;top:322.22px;font-size:11px;line-height:14.3px;color:#000;font-weight:700;white-space:pre;font-family:'Liberation Mono', monospace;letter-spacing:-0.2px;text-align:center;width:53.1px;">Ø</div>
<div style="left:629.4px;top:322.22px;font-size:11px;line-height:14.3px;color:#000;font-weight:700;white-space:pre;font-family:'Liberation Mono', monospace;letter-spacing:-0.2px;text-align:center;width:53.1px;">-93</div>
<div style="left:510.4px;top:344.78px;font-size:8.5px;line-height:11.05px;color:#222;font-weight:400;white-space:pre;font-family:'Liberation Sans', sans-serif;">ascii:</div>
<div class="sk" style="left:558.5px;top:340.6px;width:53.1px;height:16px;background:#fff;"></div>
<div class="sk" style="left:629.4px;top:340.6px;width:53.1px;height:16px;background:#fff;"></div>
<div style="left:558.5px;top:342.22px;font-size:11px;line-height:14.3px;color:#000;font-weight:700;white-space:pre;font-family:'Liberation Mono', monospace;letter-spacing:-0.2px;text-align:center;width:53.1px;"></div>
<div style="left:629.4px;top:342.22px;font-size:11px;line-height:14.3px;color:#000;font-weight:700;white-space:pre;font-family:'Liberation Mono', monospace;letter-spacing:-0.2px;text-align:center;width:53.1px;">ú</div>
<div class="gb" style="left:504.3px;top:373.8px;width:188.1px;height:48.6px"></div>
<div style="left:512px;top:369.68px;font-size:8.5px;line-height:11.05px;color:#222;font-weight:400;white-space:pre;font-family:'Liberation Sans', sans-serif;background:#f0f0f0;"> decimal 16 bit </div>
<div style="left:510.4px;top:386.28px;font-size:8.5px;line-height:11.05px;color:#222;font-weight:400;white-space:pre;font-family:'Liberation Sans', sans-serif;">unsigned:</div>
<div class="sk" style="left:564.9px;top:381.7px;width:106.7px;height:15.6px;background:#fff;"></div>
<div style="left:564.9px;top:383.02px;font-size:11px;line-height:14.3px;color:#000;font-weight:700;white-space:pre;font-family:'Liberation Mono', monospace;letter-spacing:-0.2px;text-align:center;width:106.7px;">163</div>
<div style="left:510.4px;top:405.58px;font-size:8.5px;line-height:11.05px;color:#222;font-weight:400;white-space:pre;font-family:'Liberation Sans', sans-serif;">signed:</div>
<div class="sk" style="left:564.9px;top:401.3px;width:106.7px;height:15.6px;background:#fff;"></div>
<div style="left:564.9px;top:402.62px;font-size:11px;line-height:14.3px;color:#000;font-weight:700;white-space:pre;font-family:'Liberation Mono', monospace;letter-spacing:-0.2px;text-align:center;width:106.7px;">163</div>
<div style="left:276px;top:150px;width:221px;height:161px;background:#f0f0f0;border:1px solid #3b8fd8;box-shadow:0 1px 7px 1px rgba(0,0,0,0.22);"></div>
<div style="left:277px;top:151px;width:219px;height:25.6px;background:#fff;"></div>
<svg style="position:absolute;left:283.6px;top:155.6px" width="10" height="10" viewBox="0 0 10 10"><rect x="0.6" y="0.6" width="8.80" height="8.80" fill="none" stroke="#000" stroke-width="1.2" stroke-dasharray="1 1.2"/><rect x="1.2" y="1.2" width="7.60" height="7.60" fill="#000"/><rect x="2" y="2" width="6.00" height="6.00" fill="#f0f000"/><path d="M3.60 3.00v4.20" stroke="#505000" stroke-width="1"/><path d="M4.60 3.20h2.00l-2.00 2.20z" fill="#505000"/></svg>
<div style="left:300.6px;top:156.88px;font-size:9.5px;line-height:12.35px;color:#222;font-weight:400;white-space:pre;font-family:'Liberation Sans', sans-serif;">original source co...</div>
<div style="left:400.6px;top:162px;width:8.2px;height:1px;background:#111;"></div>
<div style="left:437px;top:157.7px;width:8px;height:8px;border:1px solid #111;"></div>
<svg style="position:absolute;left:473.5px;top:157.5px" width="9" height="9" viewBox="0 0 9 9"><path d="M0.5 0.5L8.5 8.5M8.5 0.5L0.5 8.5" stroke="#111" stroke-width="1"/></svg>
<div style="left:279.4px;top:177.4px;width:213.1px;height:129.8px;background:#fff;border:1px solid #9a9a9a;box-shadow:inset 1px 1px 0 #6e6e6e;"></div>
<div style="left:280.4px;top:178.4px;width:21.3px;height:113.6px;background:#e4e4e4;"></div>
<div style="left:283px;top:176.92px;font-size:11px;line-height:14.3px;color:#a8a8a8;font-weight:700;white-space:pre;font-family:'Liberation Mono', monospace;letter-spacing:0.64px;">Ø1</div>
<div style="left:283px;top:186.58px;font-size:11px;line-height:14.3px;color:#a8a8a8;font-weight:700;white-space:pre;font-family:'Liberation Mono', monospace;letter-spacing:0.64px;">Ø2</div>
<div style="left:283px;top:196.24px;font-size:11px;line-height:14.3px;color:#a8a8a8;font-weight:700;white-space:pre;font-family:'Liberation Mono', monospace;letter-spacing:0.64px;">Ø3</div>
<div style="left:283px;top:205.90px;font-size:11px;line-height:14.3px;color:#a8a8a8;font-weight:700;white-space:pre;font-family:'Liberation Mono', monospace;letter-spacing:0.64px;">Ø4</div>
<div style="left:283px;top:215.56px;font-size:11px;line-height:14.3px;color:#a8a8a8;font-weight:700;white-space:pre;font-family:'Liberation Mono', monospace;letter-spacing:0.64px;">Ø5</div>
<div style="left:304.7px;top:198px;width:174px;height:9.7px;background:#ffff00;"></div>
<div style="left:301.5px;top:178.5px;width:177px;height:113px;overflow:hidden;">
<div style="left:4.100000000000023px;top:-1.58px;font-size:11px;line-height:14.3px;color:#000;font-weight:700;white-space:pre;font-family:'Liberation Mono', monospace;letter-spacing:0.64px;"><span style="color:#0000ff">MOU</span><span style="color:#000"> </span><span style="color:#c00000">AX</span><span style="color:#000">, 1Ø1ØØØ11b </span><span style="color:#008000">; Copy the binary value 1Ø1ØØØ11 to the accumulator</span></div>
<div style="left:4.100000000000023px;top:8.08px;font-size:11px;line-height:14.3px;color:#000;font-weight:700;white-space:pre;font-family:'Liberation Mono', monospace;letter-spacing:0.64px;"><span style="color:#0000ff">MOU</span><span style="color:#000"> </span><span style="color:#c00000">BX</span><span style="color:#000">, ØØ1111Ø1b </span><span style="color:#008000">; Copy the binary value ØØ1111Ø1 to register BX</span></div>
<div style="left:4.100000000000023px;top:17.74px;font-size:11px;line-height:14.3px;color:#000;font-weight:700;white-space:pre;font-family:'Liberation Mono', monospace;letter-spacing:0.64px;"><span style="color:#0000ff">OR</span><span style="color:#000"> </span><span style="color:#c00000">AX</span><span style="color:#000">, </span><span style="color:#c00000">BX</span><span style="color:#000"> </span><span style="color:#008000">; Pe</span></div>
</div>
<div style="left:478.5px;top:178.5px;width:12.5px;height:113.5px;background:#f0f0f0;"></div>
<div class="rb" style="left:478.6px;top:178.6px;width:12.9px;height:13.2px;"></div>
<div style="left:478.6px;top:251.6px;width:12.9px;height:27.2px;background:#f6f6f6;"></div>
<div class="rb" style="left:478.6px;top:191.8px;width:12.9px;height:59.8px;"></div>
<div class="rb" style="left:478.6px;top:278.8px;width:12.9px;height:12.8px;"></div>
<svg style="position:absolute;left:481.7px;top:183px" width="7" height="5"><path d="M0.5 4h6L3.5 0.5z" fill="#000"/></svg>
<svg style="position:absolute;left:481.5px;top:283px" width="7" height="5"><path d="M0.5 0.5h6L3.5 4z" fill="#000"/></svg>
<div style="left:280.9px;top:292px;width:211.5px;height:13.5px;background:#f0f0f0;"></div>
<div class="rb" style="left:280.9px;top:292px;width:12.5px;height:13.3px;"></div>
<div class="rb" style="left:293.5px;top:292px;width:15px;height:13.3px;"></div>
<div class="rb" style="left:465.5px;top:292px;width:13px;height:13.3px;"></div>
<svg style="position:absolute;left:285px;top:295.5px" width="5" height="7"><path d="M4 0.5v6L0.5 3.5z" fill="#000"/></svg>
<svg style="position:absolute;left:470px;top:295.5px" width="5" height="7"><path d="M0.5 0.5v6L4 3.5z" fill="#000"/></svg>
</body></html>
